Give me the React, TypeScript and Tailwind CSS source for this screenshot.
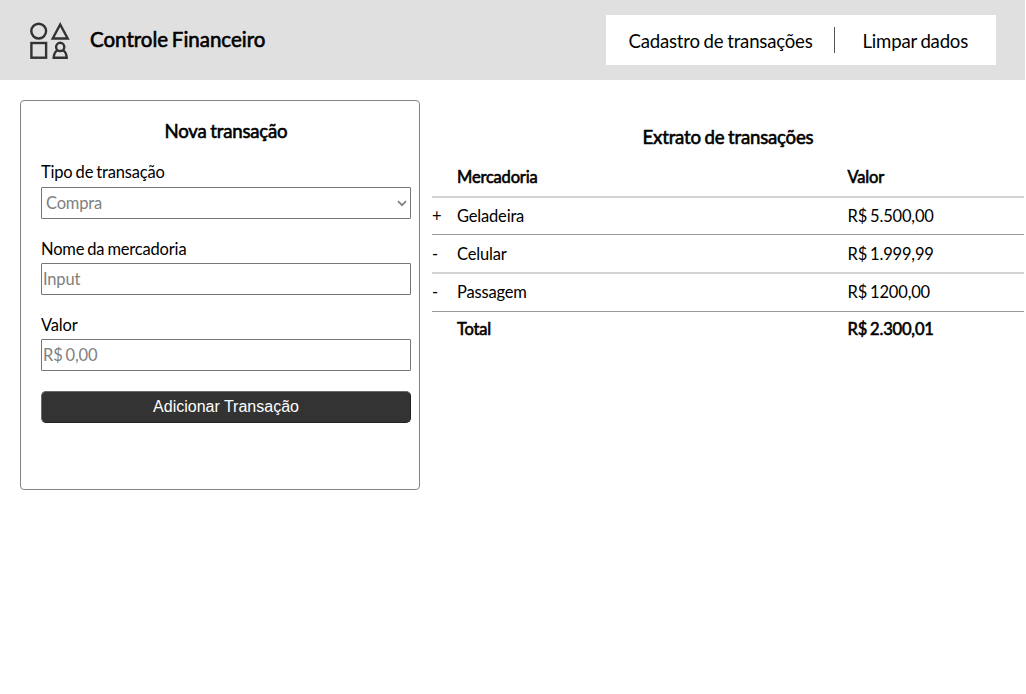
import React from "react";

const faux = "[-webkit-text-stroke:0.6px_currentColor]";
const body = "text-[16.5px] tracking-[-0.18px] [word-spacing:-1px]";
const heading = "text-[18.6px] tracking-[-0.2px] [word-spacing:-0.8px]";

const rows = [
  { sign: "+", name: "Geladeira", value: "R$ 5.500,00", style: "h-9 pb-px", line: "h-px bg-[#999999]" },
  { sign: "-", name: "Celular", value: "R$ 1.999,99", style: "h-[37px] pt-px", line: "h-[2px] bg-[#d3d3d3]" },
  { sign: "-", name: "Passagem", value: "R$ 1200,00", style: "h-[37px] pb-px", line: "h-px bg-[#999999]" },
];

function Logo() {
  return (
    <svg width="42" height="42" viewBox="0 0 42 42" fill="none" stroke="#333333" strokeWidth="2.4">
      <circle cx="10.7" cy="12.1" r="7.4" />
      <path d="M32.2 5.5 L39.7 19.5 H24.7 Z" />
      <rect x="3.4" y="24" width="14.7" height="14.7" />
      <circle cx="32.2" cy="27.9" r="4.1" />
      <path d="M29.6 31.2 C27 32.5 25.9 34.9 25.7 38.7 H38.7 C38.5 34.9 37.4 32.5 34.8 31.2" />
    </svg>
  );
}

function Row({ sign, name, value, className }: { sign?: string; name: string; value: string; className: string }) {
  return (
    <div className={`grid grid-cols-[25px_390.5px_1fr] items-center leading-5 ${body} ${className}`}>
      <span>{sign}</span>
      <span>{name}</span>
      <span>{value}</span>
    </div>
  );
}

export default function App() {
  return (
    <div className="h-[694px] overflow-hidden bg-white font-['Lato',sans-serif] text-black">
      <header className="flex h-20 w-[1025px] items-center bg-[#e0e0e0] pr-[29px] pl-7">
        <Logo />
        <h1 className={`ml-5 pb-[3px] text-[20.5px] leading-6 font-normal [word-spacing:-1.5px] ${faux}`}>Controle Financeiro</h1>
        <nav className={`ml-auto flex h-[50px] w-[390.5px] items-center bg-white pl-[23px] leading-6 ${heading}`}>
          <a className="w-[205px] pt-px">Cadastro de transações</a>
          <span className="h-[26px] w-px bg-[#555555]" />
          <a className="pt-px pl-7">Limpar dados</a>
        </nav>
      </header>
      <main className="flex">
        <form className="mt-5 ml-5 h-[390px] w-[400px] rounded-[4px] border border-[#858585] pt-[18px] pl-5">
          <h2 className={`w-[370px] text-center leading-6 font-normal ${heading} ${faux}`}>Nova transação</h2>
          <label className={`mt-[19px] block h-[25px] leading-5 ${body}`}>Tipo de transação</label>
          <div className={`flex h-8 w-[370px] items-center justify-between rounded-[1px] border border-[#767676] pr-[3px] pl-1 text-[#808080] ${body}`}>
            <span>Compra</span>
            <svg width="10" height="7" viewBox="0 0 10 7" fill="none" stroke="#808080" strokeWidth="1.7">
              <path d="M1 1.2 L5 5.2 L9 1.2" />
            </svg>
          </div>
          <label className={`mt-5 block h-6 leading-5 ${body}`}>Nome da mercadoria</label>
          <input placeholder="Input" className={`block h-8 w-[370px] rounded-[1px] border border-[#767676] px-px placeholder:text-[#808080] ${body}`} />
          <label className={`mt-5 block h-6 leading-5 ${body}`}>Valor</label>
          <input placeholder="R$ 0,00" className={`block h-8 w-[370px] rounded-[1px] border border-[#767676] px-px placeholder:text-[#808080] ${body}`} />
          <button
            type="button"
            className="mt-5 block h-8 w-[370px] rounded-[5px] border border-t-[#6b6b6b] border-r-[#222222] border-b-[#222222] border-l-[#6b6b6b] bg-[#333333] font-['Liberation_Sans',sans-serif] text-[16px] leading-[28px] text-white"
          >
            Adicionar Transação
          </button>
        </form>
        <section className="ml-3 w-[592px] pt-[45px]">
          <h2 className={`text-center leading-6 font-normal ${heading} ${faux}`}>Extrato de transações</h2>
          <Row name="Mercadoria" value="Valor" className={`mt-[18px] h-5 ${faux}`} />
          <div className="mt-[9px] h-[2px] bg-[#d3d3d3]" />
          {rows.map((r) => (
            <React.Fragment key={r.name}>
              <Row sign={r.sign} name={r.name} value={r.value} className={r.style} />
              <div className={r.line} />
            </React.Fragment>
          ))}
          <Row name="Total" value="R$ 2.300,01" className={`mt-[7px] h-5 ${faux}`} />
        </section>
      </main>
    </div>
  );
}
